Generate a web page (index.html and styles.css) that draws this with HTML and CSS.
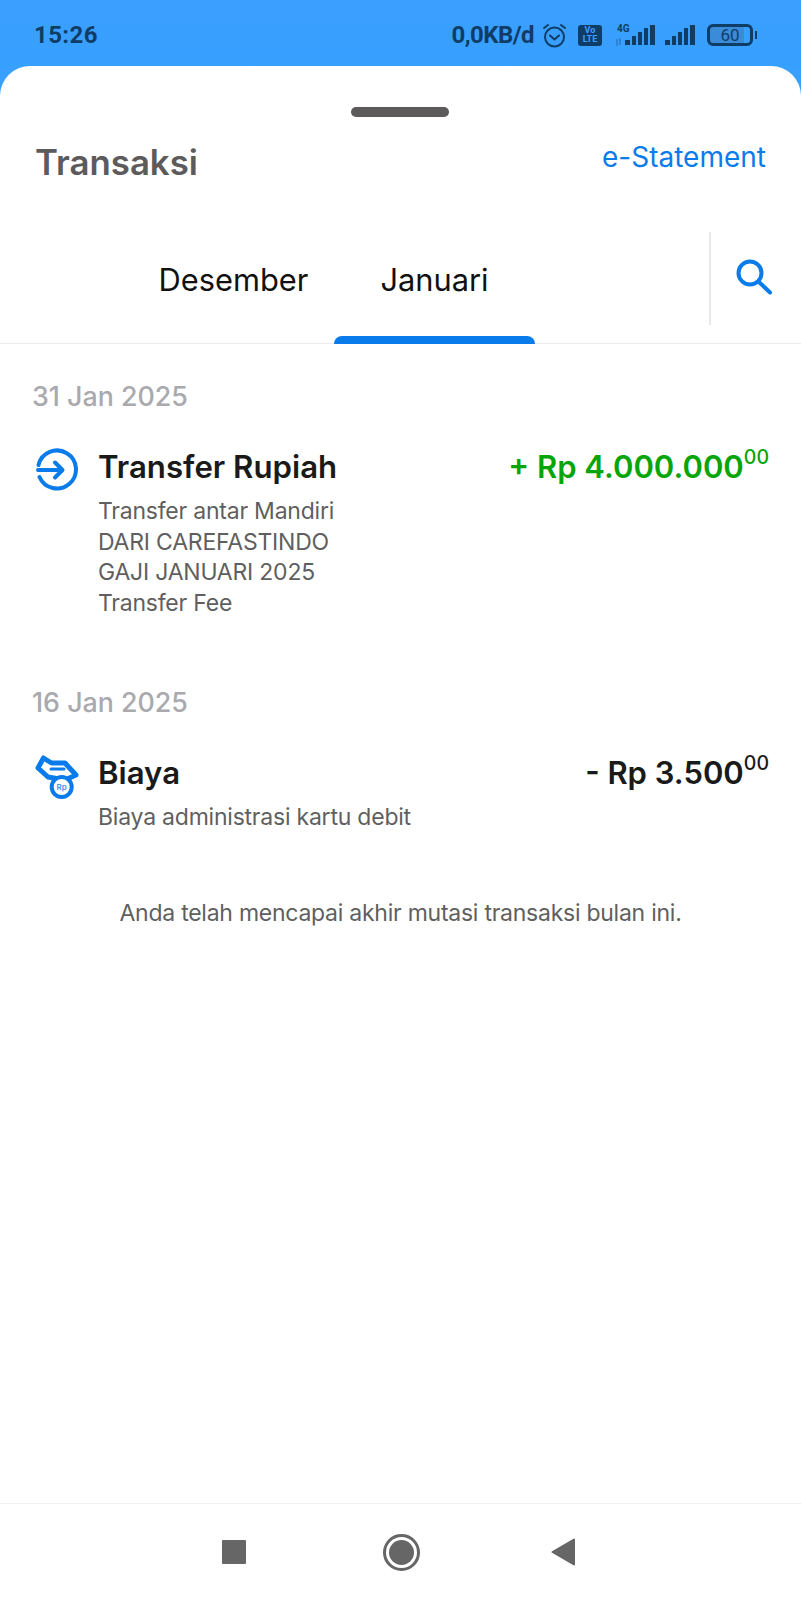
FILE: index.html
```html
<!DOCTYPE html>
<html>
<head>
<title>Transaksi</title>
<link rel="stylesheet" href="styles.css">
</head>
<body>
<div class="statusBar">
	<span class="clock">15:26</span>
	<div class="statusIcons">
		<span class="netSpeed">0,0KB/d</span>
		<svg class="alarm" width="25" height="25" viewBox="0 0 25 25" fill="none" stroke="#0f3d66" stroke-width="2" stroke-linecap="round" stroke-linejoin="round">
			<circle cx="12.5" cy="14" r="9.500"/>
			<path d="M8 12.500l4.500 4 4.500-4"/>
			<path d="M2 5l4-3M23 5l-4-3"/>
		</svg>
		<div class="volte"><span>Vo</span><span>LTE</span></div>
		<div class="signal first">
			<span class="fourG">4G</span>
			<svg width="40" height="21" viewBox="0 0 40 21" fill="#0f3d66">
				<path d="M2 14v7M5 13v7" stroke="#0f3d66" stroke-opacity=".55" stroke-width="1" fill="none"/>
				<rect x="10" y="15" width="5" height="5"/><rect x="17" y="11" width="4" height="9"/><rect x="23" y="7" width="4" height="13"/><rect x="29" y="3" width="4" height="17"/><rect x="35" y="0" width="5" height="20"/>
			</svg>
		</div>
		<svg class="signal" width="30" height="21" viewBox="0 0 30 21" fill="#0f3d66">
			<rect x="0" y="15" width="5" height="5"/><rect x="7" y="11" width="4" height="9"/><rect x="13" y="7" width="4" height="13"/><rect x="19" y="3" width="4" height="17"/><rect x="25" y="0" width="5" height="20"/>
		</svg>
		<div class="battery"><div class="batteryBody">60</div><div class="batteryTip"></div></div>
	</div>
</div>

<div class="sheet">
	<div class="handle"></div>
	<div class="titleRow">
		<h1>Transaksi</h1>
		<span class="statementLink">e-Statement</span>
	</div>
	<div class="tabRow">
		<div class="tabs">
			<div class="tab">Desember</div>
			<div class="tab active">Januari</div>
		</div>
		<div class="searchBox">
			<svg width="40" height="40" viewBox="0 0 40 40" fill="none" stroke="#0a7bea" stroke-width="4" stroke-linecap="round">
				<circle cx="15" cy="15" r="11.500"/>
				<path d="M24.500 24.500l10.500 10"/>
			</svg>
		</div>
	</div>

	<div class="list">
		<div class="dateLabel">31 Jan 2025</div>
		<div class="trx">
			<svg class="trxIcon" width="44" height="44" viewBox="0 0 44 44" fill="none" stroke="#0a7bea" stroke-width="4" stroke-linecap="round" stroke-linejoin="round">
				<path d="M3.500 17A19 19 0 1 1 4.500 29"/>
				<path d="M3 22h24M20 14.500l7.500 7.500-7.500 7.500"/>
			</svg>
			<div class="trxBody">
				<div class="trxTop">
					<span class="trxName">Transfer Rupiah</span>
					<span class="amount plus">+ Rp 4.000.000<sup>00</sup></span>
				</div>
				<div class="trxDesc">Transfer antar Mandiri<br>DARI CAREFASTINDO<br>GAJI JANUARI 2025<br>Transfer Fee</div>
			</div>
		</div>

		<div class="dateLabel second">16 Jan 2025</div>
		<div class="trx">
			<svg class="trxIcon" width="44" height="46" viewBox="0 0 44 46" fill="none" stroke="#0a7bea" stroke-width="5" stroke-linecap="round" stroke-linejoin="round">
				<path d="M8.500 4L3 14l10 9 17 3 11-5L30 9H16.500z" fill="#fff"/>
				<path d="M16 15h13" stroke-width="3"/>
				<circle cx="26.700" cy="33" r="10" fill="#fff" stroke-width="4"/>
				<text x="26.700" y="36" font-size="8" font-weight="600" fill="#3f96ee" stroke="none" text-anchor="middle">Rp</text>
			</svg>
			<div class="trxBody">
				<div class="trxTop">
					<span class="trxName">Biaya</span>
					<span class="amount">- Rp 3.500<sup>00</sup></span>
				</div>
				<div class="trxDesc">Biaya administrasi kartu debit</div>
			</div>
		</div>

		<div class="endNote">Anda telah mencapai akhir mutasi transaksi bulan ini.</div>
	</div>
</div>

<div class="navBar">
	<div class="navSquare"></div>
	<div class="navCircle"><div></div></div>
	<svg width="24" height="28" viewBox="0 0 24 28" fill="#666666" stroke="#666666" stroke-width="2" stroke-linejoin="round"><path d="M1.500 14L23 1.500v25z"/></svg>
</div>
</body>
</html>
```
FILE: styles.css
```css
*
{
	box-sizing:border-box;
}
html, body
{
	margin:0px;
	padding:0px;
}
body
{
	width:801px;
	height:1600px;
	overflow:hidden;
	display:flex;
	flex-direction:column;
	background:#3aa0ff;
	font-family:"Inter","Liberation Sans",sans-serif;
	color:#1a1a1a;
}
.statusBar
{
	height:66px;
	padding:4px 44px 0px 34px;
	display:flex;
	justify-content:space-between;
	align-items:center;
	color:#0f3d66;
	background:linear-gradient(#3c9fff,#36a0ff);
}
.clock
{
	font-size:24px;
	font-weight:700;
	font-family:"Roboto",sans-serif;
	letter-spacing:.4px;
}
.statusIcons
{
	display:flex;
	align-items:center;
}
.netSpeed
{
	font-size:24px;
	font-weight:700;
	font-family:"Roboto",sans-serif;
	letter-spacing:-.55px;
}
.alarm
{
	margin-left:8px;
}
.volte
{
	margin-left:11px;
	width:24px;
	height:21px;
	border-radius:3px;
	background:#0f3d66;
	color:#3aa0ff;
	font-size:9px;
	font-weight:700;
	line-height:9.500px;
	font-family:"Roboto",sans-serif;
	display:flex;
	flex-direction:column;
	align-items:center;
	justify-content:center;
}
.signal
{
	margin-left:10px;
}
.signal.first
{
	position:relative;
	margin-left:13px;
	display:flex;
}
.fourG
{
	position:absolute;
	left:2px;
	top:-1px;
	font-size:10px;
	line-height:10px;
	font-weight:700;
	font-family:"Roboto",sans-serif;
}
.battery
{
	margin-left:12px;
	display:flex;
	align-items:center;
}
.batteryBody
{
	width:46px;
	height:22px;
	border:3px solid #0f3d66;
	border-radius:6px;
	background:linear-gradient(90deg,#3a8bd8 85%,transparent 85%);
	font-size:17px;
	line-height:16px;
	text-align:center;
	font-family:"Roboto",sans-serif;
}
.batteryTip
{
	margin-left:2px;
	width:2px;
	height:8px;
	background:#0f3d66;
}
.sheet
{
	flex:1;
	background:#ffffff;
	border-radius:30px 30px 0px 0px;
	display:flex;
	flex-direction:column;
}
.handle
{
	align-self:center;
	margin:41px 2px 0px 0px;
	width:98px;
	height:10px;
	border-radius:5px;
	background:#5d5a5c;
}
.titleRow
{
	display:flex;
	justify-content:space-between;
	padding:20px 35px 0px 35px;
	height:115px;
}
h1
{
	margin:0px;
	font-size:34.800px;
	line-height:50px;
	font-weight:600;
	color:#5d5a5c;
}
.statementLink
{
	font-size:28px;
	line-height:41px;
	color:#0a7bea;
}
.tabRow
{
	display:flex;
	height:112px;
	border-bottom:1px solid #ececec;
}
.tabs
{
	width:709px;
	display:flex;
	padding-left:133px;
}
.tab
{
	position:relative;
	width:201px;
	height:112px;
	padding-top:26px;
	text-align:center;
	font-size:30.800px;
	line-height:44px;
	color:#111111;
}
.tab.active::after
{
	content:"";
	position:absolute;
	left:0px;
	right:0px;
	bottom:0px;
	height:8px;
	border-radius:8px 8px 0px 0px;
	background:#0a7bea;
}
.searchBox
{
	flex:1;
	height:93px;
	border-left:2px solid #e9e9e9;
	padding:26px 0px 0px 24px;
}
.list
{
	padding:0px 32px 0px 32px;
}
.dateLabel
{
	margin-top:34px;
	font-size:26.800px;
	line-height:36px;
	font-weight:500;
	color:#a9a9ae;
}
.dateLabel.second
{
	margin-top:66px;
}
.trx
{
	display:flex;
	margin-top:33px;
}
.trxIcon
{
	flex:none;
	margin:1px 19px 0px 3px;
}
.trxBody
{
	flex:1;
}
.trxTop
{
	display:flex;
	justify-content:space-between;
	height:44px;
}
.trxName
{
	font-size:31.200px;
	line-height:40px;
	font-weight:600;
}
.amount
{
	font-size:31px;
	line-height:40px;
	font-weight:600;
}
.amount.plus
{
	color:#07a507;
}
.amount sup
{
	font-size:19.500px;
	line-height:0px;
	font-weight:500;
	vertical-align:14px;
}
.trxDesc
{
	margin-top:5px;
	font-size:23px;
	letter-spacing:-.22px;
	line-height:30.500px;
	color:#5f5f5f;
}
.endNote
{
	margin-top:64px;
	text-align:center;
	font-size:23px;
	letter-spacing:-.25px;
	line-height:32px;
	color:#5f5f5f;
}
.navBar
{
	position:absolute;
	left:0px;
	right:0px;
	top:1503px;
	height:97px;
	border-top:1px solid #f0f0f0;
	background:#ffffff;
	display:flex;
	align-items:center;
	padding-left:222px;
}
.navSquare
{
	width:24px;
	height:24px;
	border-radius:1px;
	background:#666666;
}
.navCircle
{
	margin-left:137px;
	margin-right:131px;
	width:37px;
	height:37px;
	border:3px solid #666666;
	border-radius:50%;
	padding:3px;
}
.navCircle div
{
	width:25px;
	height:25px;
	border-radius:50%;
	background:#666666;
}
```
